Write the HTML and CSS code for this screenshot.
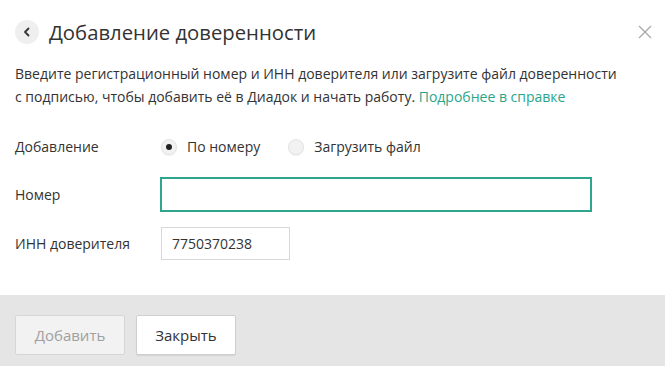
FILE: index.html
```html
<!DOCTYPE html>
<html lang="ru">
<head>
<meta charset="utf-8">
<link rel="stylesheet" href="styles.css">
</head>
<body>
<div class="dialog">
  <div class="content">
    <div class="header">
      <button class="back" aria-label="Назад">
        <svg width="10" height="10" viewBox="0 0 10 10"><path d="M6.5 1.5 L3 5 L6.5 8.5" fill="none" stroke="#333" stroke-width="1.8" stroke-linecap="round" stroke-linejoin="round"/></svg>
      </button>
      <h1 class="title">Добавление доверенности</h1>
      <button class="close" aria-label="Закрыть">
        <svg width="14" height="14" viewBox="0 0 14 14"><path d="M1 1 L13 13 M13 1 L1 13" stroke="#a8a8a8" stroke-width="1.3"/></svg>
      </button>
    </div>
    <p class="desc">Введите регистрационный номер и ИНН доверителя или загрузите файл доверенности<br>с подписью, чтобы добавить её в Диадок и начать работу. <a class="link" href="#">Подробнее в справке</a></p>
    <div class="form">
      <div class="row">
        <span class="label">Добавление</span>
        <div class="radios">
          <label class="radio"><span class="dot checked"></span>По номеру</label>
          <label class="radio"><span class="dot"></span>Загрузить файл</label>
        </div>
      </div>
      <div class="row row-num">
        <span class="label">Номер</span>
        <div class="input input-num"></div>
      </div>
      <div class="row row-inn">
        <span class="label">ИНН доверителя</span>
        <div class="input input-inn">7750370238</div>
      </div>
    </div>
  </div>
  <div class="footer">
    <button class="btn disabled">Добавить</button>
    <button class="btn close-btn">Закрыть</button>
  </div>
</div>
</body>
</html>
```
FILE: styles.css
```css
* { box-sizing: border-box; }
html, body { margin: 0; padding: 0; background: #fff; }
body {
  font-family: "Open Sans", "Noto Sans", sans-serif;
  color: #333;
  width: 665px;
  height: 366px;
  overflow: hidden;
}
.dialog { display: flex; flex-direction: column; height: 366px; }
.content { padding: 0 15px; flex: 1; }
.header {
  display: flex;
  align-items: center;
  height: 62px;
  padding-top: 1px;
}
.back {
  width: 24px; height: 24px;
  border-radius: 50%;
  background: #efefef;
  border: 0; padding: 0;
  display: flex; align-items: center; justify-content: center;
  margin-right: 10px;
}
.title {
  font-size: 20.3px;
  font-weight: 400;
  margin: 0;
  color: #333;
  flex: 1;
}
.close {
  background: none; border: 0; padding: 0;
  width: 14px; height: 14px;
  margin-right: -2px;
  display: flex;
}
.desc {
  margin: 0;
  font-size: 14px;
  line-height: 23px;
  color: #333;
  white-space: nowrap;
}
.link { color: #2ba58a; text-decoration: none; }
.form { margin-top: 29px; }
.row { display: flex; align-items: center; font-size: 14px; }
.label { width: 146px; flex: none; }
.radios { display: flex; gap: 28px; }
.radio { display: flex; align-items: center; }
.dot {
  width: 16px; height: 16px;
  border-radius: 50%;
  background: #f2f2f2;
  border: 1px solid #e4e4e4;
  margin-right: 10px;
  position: relative;
  box-shadow: 0 1px 1px rgba(0,0,0,0.06);
}
.dot.checked::after {
  content: "";
  position: absolute;
  left: 4px; top: 4px;
  width: 6px; height: 6px;
  border-radius: 50%;
  background: #222;
}
.row-num { margin-top: 21px; }
.input {
  border: 1px solid #d8d8d8;
  background: #fff;
  font-size: 14px;
  padding: 0 10px;
  display: flex;
  align-items: center;
}
.input-num {
  width: 432px; height: 35px;
  border: 2px solid #2ea58c;
  margin-left: -1px;
}
.row-inn { margin-top: 15px; }
.input-inn { width: 129px; height: 33px; }
.footer {
  height: 71px;
  background: #e5e5e5;
  display: flex;
  align-items: flex-start;
  padding: 20px 15px 0;
  gap: 11px;
}
.btn {
  font-family: "Open Sans", "Noto Sans", sans-serif;
  font-size: 15px;
  color: #333;
  height: 40px;
  padding: 0 18px;
  border: 1px solid #cfcfcf;
  background: #fff;
  border-radius: 2px;
  box-shadow: 0 1px 1px rgba(0,0,0,0.08);
}
.btn.close-btn { width: 100px; padding: 0; }
.btn.disabled { background: #f2f2f2; color: #a0a0a0; border-color: #d6d6d6; box-shadow: none; width: 110px; }
```
